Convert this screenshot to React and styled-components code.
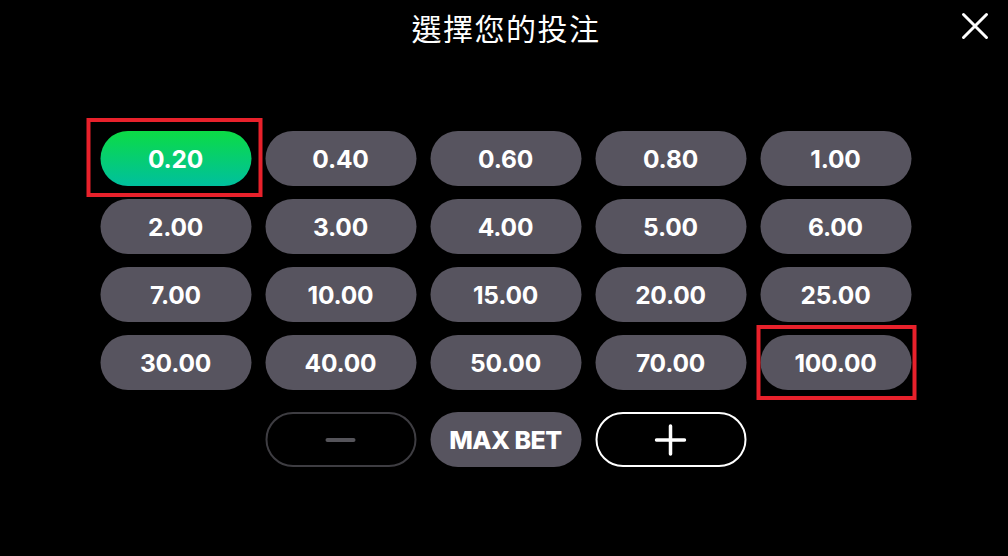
import React, { useState } from 'react';
import styled, { createGlobalStyle, css } from 'styled-components';

const GlobalStyle = createGlobalStyle`
  html, body {
    margin: 0;
    padding: 0;
    background: #000;
  }
  * {
    box-sizing: border-box;
  }
`;

const Page = styled.div`
  width: 1008px;
  height: 556px;
  background: #000;
  display: flex;
  flex-direction: column;
  align-items: center;
  font-family: Inter, "Noto Sans", "Noto Sans CJK TC", sans-serif;
  position: relative;
`;

const Header = styled.header`
  width: 100%;
  height: 56px;
  display: flex;
  align-items: center;
  justify-content: center;
  position: relative;
`;

const Title = styled.h1`
  margin: 0;
  margin-top: -3px;
  color: #fff;
  font-family: "Noto Sans CJK TC", "Noto Sans", sans-serif;
  font-weight: 400;
  font-size: 30px;
  letter-spacing: 1.5px;
  transform: translateX(2px);
`;

const CloseButton = styled.button`
  position: absolute;
  right: 17px;
  top: 10px;
  width: 32px;
  height: 32px;
  padding: 0;
  border: none;
  background: transparent;
  display: flex;
  align-items: center;
  justify-content: center;
  cursor: pointer;
`;

const Grid = styled.div`
  margin-top: 75px;
  display: grid;
  grid-template-columns: repeat(5, 151px);
  grid-auto-rows: 55px;
  column-gap: 14px;
  row-gap: 13px;
  transform: translateX(1.5px);
`;

const Highlight = css`
  &::after {
    content: '';
    position: absolute;
    top: ${p => -p.$frame[0]}px;
    right: ${p => -p.$frame[1]}px;
    bottom: ${p => -p.$frame[2]}px;
    left: ${p => -p.$frame[3]}px;
    border: 4px solid #e8212b;
    pointer-events: none;
  }
`;

const Chip = styled.button`
  position: relative;
  border: none;
  border-radius: 28px;
  background: ${p => (p.$active ? 'linear-gradient(180deg, #0cdb45 0%, #00c09e 100%)' : '#57545f')};
  color: #fff;
  font-family: Inter, "Noto Sans", sans-serif;
  font-weight: 700;
  font-size: 24.5px;
  letter-spacing: -0.2px;
  cursor: pointer;
  display: flex;
  align-items: center;
  justify-content: center;
  ${p => p.$frame && Highlight}
`;

const Controls = styled.div`
  margin-top: 22px;
  display: grid;
  grid-template-columns: repeat(3, 151px);
  grid-auto-rows: 55px;
  column-gap: 14px;
  transform: translateX(1.5px);
`;

const StepButton = styled.button`
  border-radius: 28px;
  background: transparent;
  border: 2px solid ${p => (p.$disabled ? '#3e3d42' : '#fff')};
  display: flex;
  align-items: center;
  justify-content: center;
  cursor: ${p => (p.$disabled ? 'default' : 'pointer')};
  padding: 0;
`;

const MaxBet = styled(Chip)`
  font-size: 25px;
  font-weight: 800;
  letter-spacing: -0.5px;
`;

const BETS = [
  '0.20', '0.40', '0.60', '0.80', '1.00',
  '2.00', '3.00', '4.00', '5.00', '6.00',
  '7.00', '10.00', '15.00', '20.00', '25.00',
  '30.00', '40.00', '50.00', '70.00', '100.00',
];

// red marker frames: [top, right, bottom, left] distance outside the chip
const FRAMES = {
  '0.20': [13, 11, 11, 14],
  '100.00': [10, 5, 10, 4],
};

export default function App() {
  const [selected, setSelected] = useState('0.20');

  return (
    <>
      <GlobalStyle />
      <Page>
        <Header>
          <Title>選擇您的投注</Title>
          <CloseButton aria-label="close">
            <svg width="28" height="28" viewBox="0 0 28 28">
              <path d="M2.5 2.5 L25.5 25.5 M25.5 2.5 L2.5 25.5" stroke="#fff" strokeWidth="3" strokeLinecap="round" />
            </svg>
          </CloseButton>
        </Header>

        <Grid>
          {BETS.map(bet => (
            <Chip
              key={bet}
              $active={bet === selected}
              $frame={FRAMES[bet]}
              onClick={() => setSelected(bet)}
            >
              {bet}
            </Chip>
          ))}
        </Grid>

        <Controls>
          <StepButton $disabled aria-label="decrease">
            <svg width="32" height="6" viewBox="0 0 32 6">
              <path d="M3 3 H29" stroke="#55545a" strokeWidth="4" strokeLinecap="round" />
            </svg>
          </StepButton>
          <MaxBet onClick={() => setSelected('100.00')}>MAX BET</MaxBet>
          <StepButton aria-label="increase">
            <svg width="32" height="32" viewBox="0 0 32 32">
              <path d="M16 2 V30 M2 16 H30" stroke="#fff" strokeWidth="3.5" strokeLinecap="round" />
            </svg>
          </StepButton>
        </Controls>
      </Page>
    </>
  );
}
